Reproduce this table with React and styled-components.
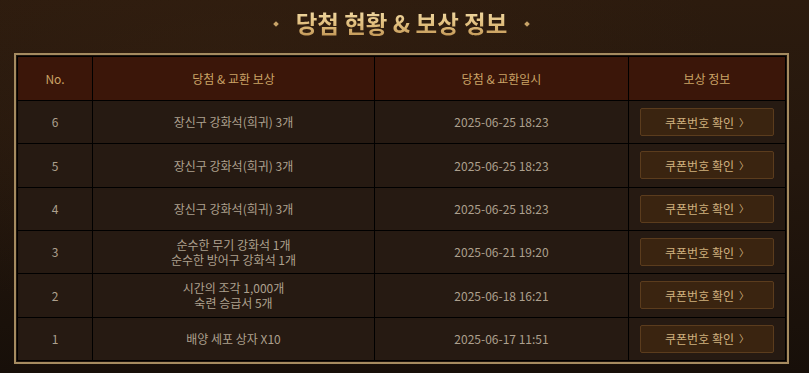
import styled, { createGlobalStyle } from "styled-components";

const rows = [
  { no: 6, reward: ["장신구 강화석(희귀) 3개"], date: "2025-06-25 18:23" },
  { no: 5, reward: ["장신구 강화석(희귀) 3개"], date: "2025-06-25 18:23" },
  { no: 4, reward: ["장신구 강화석(희귀) 3개"], date: "2025-06-25 18:23" },
  { no: 3, reward: ["순수한 무기 강화석 1개", "순수한 방어구 강화석 1개"], date: "2025-06-21 19:20" },
  { no: 2, reward: ["시간의 조각 1,000개", "숙련 승급서 5개"], date: "2025-06-18 16:21" },
  { no: 1, reward: ["배양 세포 상자 X10"], date: "2025-06-17 11:51" }
];

const GlobalStyle = createGlobalStyle`
  html, body {
    margin: 0;
    padding: 0;
    background: #1a110a;
  }
  body {
    font-family: "Noto Sans CJK KR", "Noto Sans", sans-serif;
  }
`;

const App = () => {
  return (
    <>
      <GlobalStyle />
      <Wrapper>
        <TitleBar>
          <Diamond />
          <Title>당첨 현황 &amp; 보상 정보</Title>
          <Diamond />
        </TitleBar>
        <Frame>
          <Grid>
            <HeadCell>No.</HeadCell>
            <HeadCell>당첨 &amp; 교환 보상</HeadCell>
            <HeadCell>당첨 &amp; 교환일시</HeadCell>
            <HeadCell>보상 정보</HeadCell>
            {rows.map((row) => (
              <Row key={row.no}>
                <Cell>{row.no}</Cell>
                <Cell>
                  {row.reward.map((line) => (
                    <span key={line}>{line}</span>
                  ))}
                </Cell>
                <Cell>{row.date}</Cell>
                <Cell>
                  <CouponButton type="button">
                    쿠폰번호 확인<Chevron>〉</Chevron>
                  </CouponButton>
                </Cell>
              </Row>
            ))}
          </Grid>
        </Frame>
      </Wrapper>
    </>
  );
};

const Wrapper = styled.div`
  width: 809px;
  height: 373px;
  box-sizing: border-box;
  padding: 0 20px 0 14px;
  background:
    radial-gradient(ellipse at 30% 20%, rgba(60, 36, 18, 0.35), transparent 60%),
    linear-gradient(180deg, #2c1b0e 0%, #24170d 45%, #170f09 100%);
  overflow: hidden;
`;

const TitleBar = styled.div`
  height: 53px;
  display: flex;
  align-items: center;
  justify-content: center;
  gap: 18px;
  box-sizing: border-box;
`;

const Title = styled.h1`
  margin: 0 0 7px;
  font-size: 23.5px;
  font-weight: 700;
  letter-spacing: 0;
  background: linear-gradient(180deg, #f6e2b0 0%, #e0bd7c 55%, #b98c4c 100%);
  -webkit-background-clip: text;
  background-clip: text;
  color: transparent;
`;

const Diamond = styled.i`
  width: 4px;
  height: 4px;
  margin-bottom: 5px;
  background: #c9a468;
  transform: rotate(45deg);
`;

const Frame = styled.div`
  width: 775px;
  box-sizing: border-box;
  border: 2px solid #a58b60;
  padding: 1px;
  background: #1f150d;
`;

const Grid = styled.div`
  display: grid;
  grid-template-columns: 74px 281px 253px 156px;
  grid-template-rows: 43px repeat(6, 42.33px);
  gap: 1px;
  padding: 1px;
  background: #000;
`;

const Row = styled.div`
  display: contents;
`;

const HeadCell = styled.div`
  display: flex;
  align-items: center;
  justify-content: center;
  background: #3b1609;
  color: #caa366;
  font-size: 12px;
  font-weight: 400;
`;

const Cell = styled.div`
  display: flex;
  flex-direction: column;
  align-items: center;
  justify-content: center;
  background: #261a12;
  color: #ada08e;
  font-size: 12px;
  line-height: 15.5px;
  text-align: center;
`;

const CouponButton = styled.button`
  width: 134px;
  height: 28px;
  box-sizing: border-box;
  border: 1px solid #5b3c1d;
  border-radius: 2px;
  background: #3a2410;
  color: #cfb07e;
  font-family: inherit;
  font-size: 12px;
  font-weight: 400;
  cursor: pointer;
  display: flex;
  align-items: center;
  justify-content: center;
  gap: 5px;
  padding: 0;
`;

const Chevron = styled.span`
  font-size: 10px;
`;

export default App;
